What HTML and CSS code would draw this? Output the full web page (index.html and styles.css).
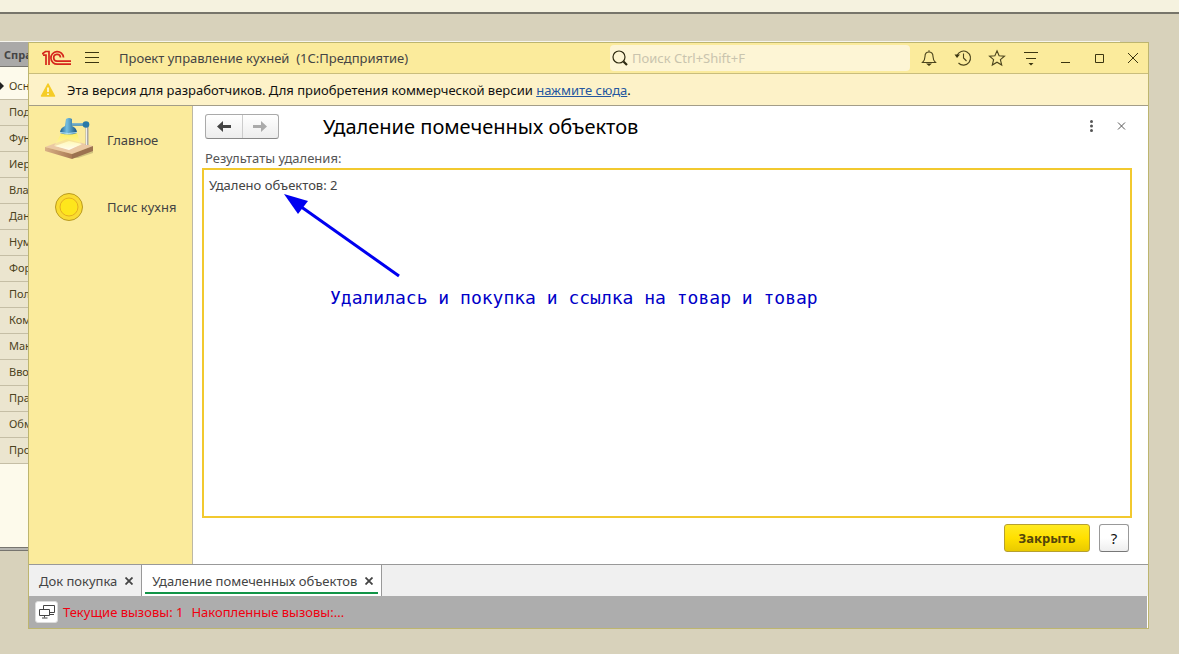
FILE: index.html
```html
<!DOCTYPE html>
<html lang="ru">
<head>
<meta charset="utf-8">
<title>Проект управление кухней (1С:Предприятие)</title>
<link rel="stylesheet" href="styles.css">
</head>
<body>
<div class="desktop">
  <div class="top-strip"></div>
  <aside class="designer">
    <div class="designer-title">Справочник</div>
    <ul class="designer-list">
      <li class="current">Основные</li>
      <li>Подсистемы</li>
      <li>Функциональные</li>
      <li>Иерархия</li>
      <li>Владельцы</li>
      <li>Данные</li>
      <li>Нумерация</li>
      <li>Формы</li>
      <li>Поле ввода</li>
      <li>Команды</li>
      <li>Макеты</li>
      <li>Ввод на основании</li>
      <li>Права</li>
      <li>Обмен данными</li>
      <li>Прочее</li>
    </ul>
  </aside>

  <div class="window">
    <header class="titlebar">
      <svg class="logo" width="30" height="16" viewBox="0 0 30 16" fill="none" stroke="#d5251c" stroke-width="1.700">
        <path d="M0 4 3.500 1.500H7V15M1 5.200h3V15"/>
        <path d="M21.500 7.500A6.300 6.300 0 1 0 15.500 14.200H29"/>
        <path d="M18.500 7.500A3.400 3.400 0 1 0 15.300 11.200H29"/>
      </svg>
      <button class="icon-btn menu" aria-label="Меню">
        <svg width="14" height="12" viewBox="0 0 14 12" stroke="#3b3510"><path d="M0 .5h14M0 5.500h14M0 10.500h14"/></svg>
      </button>
      <h1 class="app-name">Проект управление кухней&nbsp; (1С:Предприятие)</h1>
      <label class="search">
        <svg width="16" height="16" viewBox="0 0 16 16" fill="none" stroke="#2e2a12"><circle cx="7" cy="7" r="6" stroke-width="1.200"/><path d="m11.500 11.500 3.500 3.500" stroke-width="2.200"/></svg>
        <input type="search" placeholder="Поиск Ctrl+Shift+F" aria-label="Поиск">
      </label>
      <div class="tools">
        <button class="icon-btn" aria-label="Уведомления"><svg width="18" height="18" viewBox="0 0 18 18" fill="none" stroke="#4b441c" stroke-width="1.100"><path d="M9 1.200v1.600M2.500 13.500h13c-2-2-2.500-3.500-2.500-6C13 4.500 11.500 3 9 3S5 4.500 5 7.500c0 2.500-.5 4-2.500 6z"/><path d="M6 14.500h6L9 17z" fill="#3b3510" stroke="none"/></svg></button>
        <button class="icon-btn" aria-label="История"><svg width="18" height="18" viewBox="0 0 18 18" fill="none" stroke="#4b441c" stroke-width="1.100"><path d="M3 6.500A7 7 0 1 1 4.500 14M9.500 4.500V9l3 3"/><path d="M.5 5.500h5.500L3 9z" fill="#3b3510" stroke="none"/></svg></button>
        <button class="icon-btn" aria-label="Избранное"><svg width="18" height="18" viewBox="0 0 18 18" fill="none" stroke="#4b441c" stroke-width="1.100"><path d="m9 1.800 2.100 4.900 5.400.5-4.100 3.500 1.300 5.300L9 13.200 4.300 16l1.300-5.300L1.500 7.200l5.400-.5z"/></svg></button>
        <button class="icon-btn" aria-label="Настройки"><svg width="18" height="18" viewBox="0 0 18 18" stroke="#3b3510"><path d="M2 3.500h14M4 9.500h10" stroke-width="1.100"/><path d="M6.500 14h5L9 16.500z" fill="#3b3510" stroke="none"/></svg></button>
        <button class="icon-btn" aria-label="Свернуть"><svg width="18" height="18" viewBox="0 0 18 18" stroke="#3b3510"><path d="M5 13.500h9"/></svg></button>
        <button class="icon-btn" aria-label="Развернуть"><svg width="18" height="18" viewBox="0 0 18 18" fill="none" stroke="#3b3510"><path d="M5.500 5.500h8v8h-8z"/></svg></button>
        <button class="icon-btn" aria-label="Закрыть окно"><svg width="18" height="18" viewBox="0 0 18 18" stroke="#3b3510"><path d="m4 4 10 10M14 4 4 14"/></svg></button>
      </div>
    </header>

    <div class="banner">
      <svg width="16" height="16" viewBox="0 0 16 16"><path d="M8 2 14.500 14h-13z" fill="#f5cc27" stroke="#f5cc27" stroke-width="1.500" stroke-linejoin="round"/><path d="M8 5.500v4.500M8 11.500v1.500" stroke="#fff" stroke-width="1.500"/></svg>
      <p>Эта версия для разработчиков. Для приобретения коммерческой версии <a href="#">нажмите сюда</a>.</p>
    </div>

    <div class="body">
      <nav class="sections">
        <a href="#" class="section">
          <svg width="50" height="48" viewBox="0 0 50 48">
            <defs>
              <linearGradient id="shade" x1="0" x2="1"><stop offset="0" stop-color="#1b5c8c"/><stop offset=".4" stop-color="#75bfe2"/><stop offset="1" stop-color="#16527f"/></linearGradient>
              <linearGradient id="wood" x1="0" x2="1"><stop offset="0" stop-color="#d9b086"/><stop offset="1" stop-color="#a97a55"/></linearGradient>
              <linearGradient id="glow" x1="0" y1="0" x2="0" y2="1"><stop offset="0" stop-color="#fff04a"/><stop offset="1" stop-color="#fffbd0" stop-opacity=".5"/></linearGradient>
            </defs>
            <path d="m26 42 23-8v3L34 42z" fill="#a89c62" opacity=".5"/>
            <path d="m1 31 22-8 26 7-21 8z" fill="#ebc9a4"/>
            <path d="m1 31 27 7v5L1 35z" fill="url(#wood)"/>
            <path d="m28 38 21-8v5l-21 8z" fill="#9c7250"/>
            <path d="m11 30 14-5 13 3-13 6z" fill="#fffdf2"/>
            <path d="m17 18-7 12 14 3 13-4-4-12z" fill="url(#glow)" opacity=".8"/>
            <path d="M43 10v19" stroke="#aaa7a3" stroke-width="3"/><path d="M42.500 10v19" stroke="#eee"/>
            <path d="M26 8.500h16" stroke="#3d87b3" stroke-width="2.500"/><path d="M28 8h13" stroke="#a5d4e8" stroke-width=".8"/>
            <circle cx="42" cy="8.500" r="3.300" fill="#2878a8"/>
            <path d="M22 3q3-2 6 0v7q5 2 5 7-8 3-17 0 0-5 5-7z" fill="url(#shade)"/>
            <path d="M16 16.500q8 2 17 0" stroke="#b6e2f3" fill="none"/>
          </svg>
          <span>Главное</span>
        </a>
        <a href="#" class="section">
          <svg width="50" height="30" viewBox="0 0 50 30"><circle cx="25" cy="15" r="13.500" fill="#fadc32" stroke="#b99a20"/><circle cx="25" cy="15" r="9" fill="#fee61c" stroke="#e5ae20"/></svg>
          <span>Псис кухня</span>
        </a>
      </nav>

      <main class="form">
        <div class="form-head">
          <div class="history">
            <button aria-label="Назад"><svg width="14" height="11" viewBox="0 0 14 11"><path d="M0 5.500 6 0v4h8v3H6v4z" fill="#444"/></svg></button>
            <button aria-label="Вперед" disabled><svg width="14" height="11" viewBox="0 0 14 11"><path d="M14 5.500 8 0v4H0v3h8v4z" fill="#aaa"/></svg></button>
          </div>
          <h2>Удаление помеченных объектов</h2>
          <button class="icon-btn" aria-label="Еще"><svg width="18" height="18" viewBox="0 0 18 18" fill="#555"><circle cx="9.500" cy="3.500" r="1.500"/><circle cx="9.500" cy="8" r="1.500"/><circle cx="9.500" cy="12.500" r="1.500"/></svg></button>
          <button class="icon-btn" aria-label="Закрыть форму"><svg width="18" height="18" viewBox="0 0 18 18" stroke="#555"><path d="m6 4.500 7 7M13 4.500l-7 7"/></svg></button>
        </div>
        <div class="caption" id="results-label">Результаты удаления:</div>
        <section class="results" aria-labelledby="results-label">
          <p>Удалено объектов: 2</p>
          <div class="note">
            <svg width="116" height="84" viewBox="0 0 116 84"><path d="M16 12 115 82" stroke="#0000f0" stroke-width="3"/><path d="m0 0 24 7-10 13z" fill="#0000f0"/></svg>
            <span>Удалилась и покупка и ссылка на товар и товар</span>
          </div>
        </section>
        <div class="actions">
          <button class="btn primary">Закрыть</button>
          <button class="btn help">?</button>
        </div>
      </main>
    </div>

    <div class="tabs">
      <div class="tab"><span>Док покупка</span><button aria-label="Закрыть вкладку"><svg width="8" height="8" viewBox="0 0 8 8" stroke="#444" stroke-width="1.800"><path d="m.5.5 7 7M7.500.5l-7 7"/></svg></button></div>
      <div class="tab active"><span>Удаление помеченных объектов</span><button aria-label="Закрыть вкладку"><svg width="8" height="8" viewBox="0 0 8 8" stroke="#444" stroke-width="1.800"><path d="m.5.5 7 7M7.500.5l-7 7"/></svg></button></div>
    </div>

    <footer class="status">
      <button aria-label="Показатели"><svg width="16" height="14" viewBox="0 0 16 14" fill="#fff" stroke="#444"><path d="M4.500.5h11v7h-11zM11 9.500h4"/><path d="M.5 4.500h10v6H.5zM5.500 10.500v2M3 13h5.500"/></svg></button>
      <span>Текущие вызовы: 1</span>
      <span>Накопленные вызовы:...</span>
    </footer>
  </div>
</div>
</body>
</html>
```
FILE: styles.css
```css
* { box-sizing: border-box; }

body {
  margin: 0;
  font: 13px/18px "Noto Sans", sans-serif;
  color: #444;
}

h1, h2, p, ul { margin: 0; padding: 0; font-weight: 400; }
button { padding: 0; font: inherit; color: inherit; }
svg { display: block; flex: none; }

.desktop {
  position: relative;
  min-height: 100vh;
  background: #d8d2bb;
  overflow: hidden;
}

.top-strip {
  height: 14px;
  background: #f5f2df;
  border-bottom: 2px solid #77756a;
}

/* configurator window, mostly hidden behind the application */
.designer {
  width: 95%;
  height: 510px;
  margin-top: 27px;
  background: #fdfaeb;
  border-top: 1px solid #f6f5ee;
  border-bottom: 1px solid #77756f;
  box-shadow: inset 0 -2px #b5b4b0, inset 0 -3px #77756f;
  font-size: 11px;
}

.designer-title {
  height: 25px;
  padding-left: 4px;
  line-height: 26px;
  font-weight: 700;
  background: #aaa9a8;
  border-bottom: 1px solid #77756f;
}

.designer-list { list-style: none; padding-top: 7px; }

.designer-list li {
  position: relative;
  height: 26px;
  padding-left: 9px;
  line-height: 24px;
  color: #4c4320;
  background: #ebe5cf;
  border-bottom: 1px solid #c5bea5;
}

.designer-list .current { background: #fdfaeb; }

.designer-list .current::before {
  content: "";
  position: absolute;
  left: 0;
  top: 8px;
  border: 4px solid transparent;
  border-left-color: #222;
  border-right: 0;
}

/* application window */
.window {
  position: absolute;
  inset: 42px 30px 25px 28px;
  display: flex;
  flex-direction: column;
  background: #fff;
  border: 1px solid #bdb56f;
}

.icon-btn {
  display: grid;
  place-items: center;
  background: none;
  border: 0;
}

.titlebar {
  display: flex;
  align-items: center;
  height: 31px;
  padding: 0 6px 0 13px;
  background: #fbeb9c;
  border-bottom: 1px solid #c9bd7c;
}

.menu { margin-left: 13px; }
.app-name { flex: 1; margin-left: 20px; font-size: 13px; }

.search {
  display: flex;
  align-items: center;
  gap: 4px;
  width: 300px;
  height: 26px;
  padding-left: 2px;
  background: #fdf5d5;
  border-radius: 4px;
}

.search input {
  flex: 1;
  min-width: 0;
  padding: 0;
  background: none;
  border: 0;
  outline: 0;
  font: inherit;
}

.search input::placeholder { color: #c9c4ae; }

.tools { display: flex; gap: 16px; margin-left: 10px; }

.banner {
  display: flex;
  align-items: center;
  gap: 11px;
  height: 32px;
  padding-left: 11px;
  color: #111;
  background: #fdf2c8;
  border-bottom: 1px solid #a39d88;
}

.banner a { color: #2557a0; }

.body { flex: 1; display: flex; min-height: 0; }

.sections {
  display: flex;
  flex-direction: column;
  gap: 28px;
  width: 164px;
  padding: 10px 0 0 15px;
  background: #fbeb9c;
  border-right: 1px solid #bdb8a4;
}

.section {
  display: flex;
  align-items: center;
  gap: 13px;
  color: #444;
  text-decoration: none;
}

.form {
  flex: 1;
  display: flex;
  flex-direction: column;
  min-width: 0;
  padding: 8px 16px 12px 9px;
}

.form-head {
  display: flex;
  align-items: center;
  gap: 12px;
  height: 25px;
  padding: 0 2px 0 3px;
}

.form-head h2 {
  flex: 1;
  margin-left: 32px;
  font-size: 20px;
  line-height: 25px;
  color: #000;
}

.history {
  display: flex;
  width: 74px;
  height: 25px;
  background: linear-gradient(#fff, #ededed);
  border: 1px solid #aaa;
  border-bottom-color: #888;
  border-radius: 3px;
}

.history button {
  flex: 1;
  display: grid;
  place-items: center;
  background: none;
  border: 0;
}

.history button + button { border-left: 1px solid #ccc; }

.caption { padding: 10px 0 0 3px; color: #555; }

.results {
  flex: 1;
  margin-top: 1px;
  padding: 6px 5px;
  border: 2px solid #f2c92f;
}

/* hand-made annotation laid over the results */
.note {
  display: flex;
  flex-direction: column;
  gap: 8px;
  padding-left: 75px;
  color: #0000c8;
  font: 18px/24px "DejaVu Sans Mono", monospace;
}

.note span { padding-left: 46px; white-space: nowrap; }

.actions {
  display: flex;
  justify-content: flex-end;
  gap: 9px;
  padding: 6px 3px 0 0;
}

.btn {
  height: 28px;
  border: 1px solid #999;
  border-bottom-color: #777;
  border-radius: 3px;
  background: linear-gradient(#fff 50%, #eee);
}

.primary {
  width: 86px;
  font-weight: 700;
  color: #54460b;
  background: linear-gradient(#ffea22, #ffe000 50%, #e9ca00);
  border-color: #b6a030;
}

.help { width: 30px; font-size: 15px; color: #111; }

.tabs {
  display: flex;
  height: 32px;
  background: #f0f0f0;
  border-top: 1px solid #999;
}

.tab {
  display: flex;
  align-items: center;
  gap: 8px;
  padding: 0 8px 0 10px;
  border-right: 1px solid #999;
}

.tab button { background: none; border: 0; }

.active {
  position: relative;
  background: #fff;
}

.active::after {
  content: "";
  position: absolute;
  inset: auto 3px 2px 3px;
  height: 2px;
  background: #119447;
}

.status {
  display: flex;
  align-items: center;
  gap: 8px;
  height: 32px;
  margin-right: 1px;
  padding-left: 6px;
  color: #f00010;
  background: #adadad;
}

.status button {
  display: grid;
  place-items: center;
  width: 23px;
  height: 22px;
  margin-right: -3px;
  background: #fff;
  border: 1px solid #ddd;
  border-radius: 3px;
}
```
